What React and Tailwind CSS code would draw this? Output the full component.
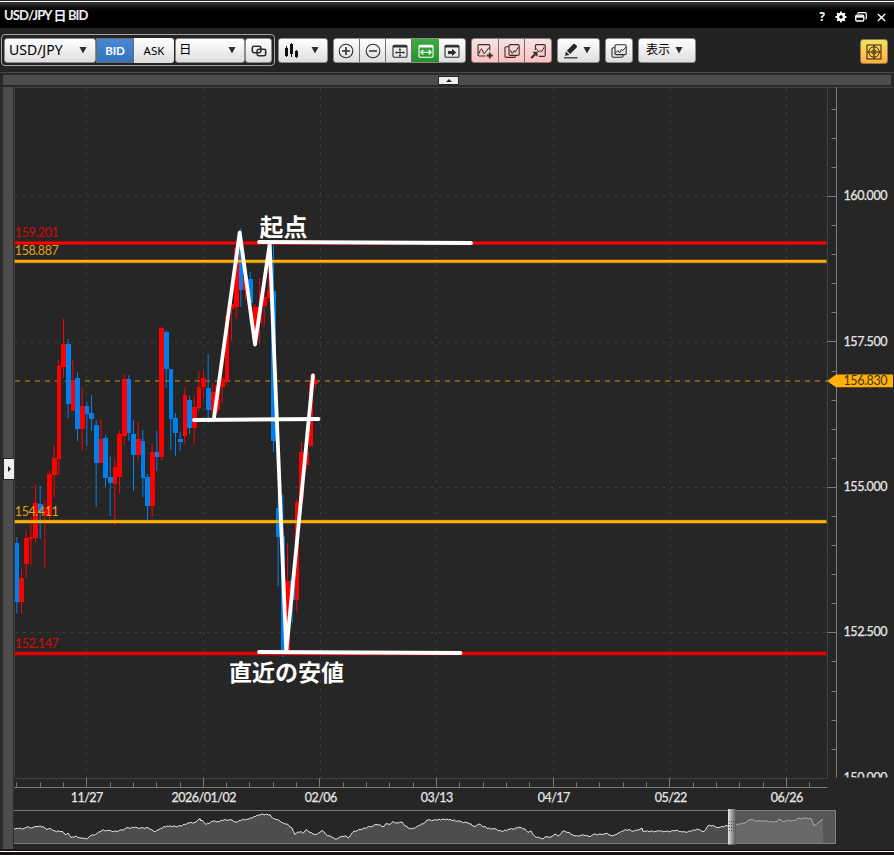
import React from 'react';

const UP = '#ff0000';
const DOWN = '#0080ee';

// direction, high, open/close top, open/close bottom, low
const candles = [
  ['d', 537, 543, 602, 613.5], ['u', 569, 578, 602, 614], ['u', 531, 538, 564, 578],
  ['u', 517, 537, 539, 565], ['u', 485, 503, 538, 543], ['d', 486, 504, 513, 539],
  ['u', 501, 510, 515, 568], ['u', 470, 474, 515, 520], ['u', 445, 458, 475, 498],
  ['u', 360, 366, 459, 475], ['u', 319, 344, 367, 378], ['d', 339, 344, 404, 418],
  ['u', 360, 380, 411, 411], ['d', 372, 378, 429, 441], ['u', 387, 406, 429, 450],
  ['d', 402, 406, 414, 446], ['d', 395, 413, 419, 431], ['d', 420, 425, 463, 507],
  ['u', 419, 439, 463, 463], ['d', 435, 438, 478, 487], ['d', 456, 477, 483, 516],
  ['u', 459, 467, 484, 526], ['u', 430, 434, 477, 493], ['u', 374, 379, 436, 445],
  ['d', 375, 379, 433, 441], ['d', 420, 434, 455, 491], ['u', 422, 439, 455, 461],
  ['d', 430, 441, 478, 497], ['d', 474, 477, 506, 520], ['u', 444, 452, 506, 516],
  ['d', 431, 452, 457, 471], ['u', 327, 328, 457, 460], ['d', 330, 332, 369, 388],
  ['d', 369, 369, 419, 450], ['d', 413, 418, 433, 456], ['d', 432, 439, 442, 451],
  ['u', 387, 395, 436, 444], ['d', 396, 400, 428, 434], ['u', 396, 407, 428, 444],
  ['u', 371, 387, 408, 411], ['u', 371, 378, 387, 399], ['d', 354, 388, 410, 423],
  ['u', 383, 392, 411, 417], ['u', 383, 385, 410, 413], ['u', 377, 379, 387, 403],
  ['u', 315, 316, 381, 385], ['u', 300, 304, 309, 341], ['u', 247, 248, 307, 319],
  ['d', 228, 248, 290, 307], ['u', 275, 278, 290, 300], ['d', 272, 279, 303, 323],
  ['u', 304, 307, 338, 345], ['u', 278, 307, 323, 344], ['u', 295, 297, 306, 327],
  ['u', 250, 290, 298, 302], ['d', 245, 291, 441, 452], ['d', 495, 508, 537, 586],
  ['d', 495, 536, 650, 657], ['u', 543, 581, 650, 650], ['d', 580, 580, 600, 623],
  ['u', 499, 502, 600, 612], ['u', 442, 452, 500, 514], ['u', 440, 452, 465, 470],
  ['u', 373, 383, 446, 447], ['u', 378, 381, 384, 388],
];

const dates = [
  [86.5, '11/27'], [203.5, '2026/01/02'], [320.5, '02/06'], [436.5, '03/13'],
  [553.5, '04/17'], [670.5, '05/22'], [786.5, '06/26'],
];
const prices = [[196.5, '160.000'], [342.5, '157.500'], [487.5, '155.000'], [632.5, '152.500']];

const levels = [
  { y: 243, label: '159.201', color: '#ff0000', text: '#d90808', edge: '#8c1010' },
  { y: 261.3, label: '158.887', color: '#ffb10a', text: '#e3a317', edge: '#8b651a' },
  { y: 521.6, label: '154.411', color: '#ffb10a', text: '#e3a317', edge: '#8b651a' },
  { y: 653.5, label: '152.147', color: '#ff0000', text: '#d90808', edge: '#8c1010' },
];

const overview = [
  [14, 828.5], [24, 828.5], [27, 827], [33, 827.5], [37, 826.5], [43, 826.5], [47, 829.5], [51, 828.5], [55, 831],
  [62, 831.5], [65, 834.5], [68, 833], [71, 837.5], [76, 836], [80, 838], [86, 839], [91, 835.5], [97, 833.5],
  [102, 830.5], [109, 830.5], [117, 831.5], [122, 830], [128, 827.5], [138, 828], [147, 827.5], [154, 831.5],
  [159, 829.5], [164, 826.5], [181, 826], [188, 823], [196, 822], [200, 818.5], [201, 821], [202, 820], [206, 824.5],
  [213, 821], [218, 821.5], [224, 820], [232, 820], [236, 822], [242, 820], [249, 819], [254, 816.5], [261, 814.5],
  [270, 814.5], [273, 818.5], [280, 821], [285, 824], [288, 824.5], [292, 828], [295, 834.5], [298, 832],
  [304, 832.5], [306, 829.5], [310, 832.5], [317, 834.5], [322, 830.5], [326, 834.5], [330, 836], [335, 839],
  [340, 837], [345, 836], [348, 838], [354, 831], [361, 829.5], [370, 826.5], [377, 824.5], [384, 826.5],
  [386, 823.5], [390, 824.5], [393, 821.5], [398, 823], [402, 822], [405, 826], [411, 829], [417, 826.5],
  [423, 824], [427, 820], [436, 820], [447, 819], [453, 820.5], [461, 821.5], [468, 823], [475, 826.5],
  [479, 824], [488, 828.5], [496, 829], [502, 831.5], [510, 829], [521, 827.5], [525, 829], [528, 832.5],
  [531, 831], [535, 836.5], [540, 838], [543, 839], [547, 836.5], [551, 837], [555, 834], [558, 836], [563, 831],
  [568, 832.5], [575, 836], [582, 835], [589, 836.5], [595, 834], [602, 834.5], [606, 833.5], [613, 836],
  [618, 833], [624, 830.5], [629, 829.5], [633, 831.5], [637, 830], [642, 828], [643, 831.5], [657, 831],
  [666, 831.5], [676, 830.5], [683, 832], [692, 831], [697, 829], [704, 831.5], [708, 825.5], [715, 826.5],
  [719, 827.5], [726, 825.5], [736, 825], [742, 823], [746, 822.5], [750, 819.5], [757, 821], [764, 820.5],
  [770, 822], [777, 821.5], [779, 819], [782, 821], [795, 820.5], [799, 818], [811, 818.5], [814, 825.5],
  [817, 823.5], [820, 821], [823, 820],
];

// small steps between the sampled points, so the line keeps its jagged look
const buildLine = (points) => {
  const wobble = [0.5, -0.4, 0.1, -0.7, 0.6, 0, -0.3, 0.7];
  let path = `M${points[0][0]} ${points[0][1]}`;
  let n = 0;
  for (let i = 1; i < points.length; i++) {
    const [px, py] = points[i - 1];
    const [x, y] = points[i];
    for (let cx = px + 1.5; cx < x - 1; cx += 1.5) {
      const cy = py + ((y - py) * (cx - px)) / (x - px) + wobble[n++ % wobble.length];
      path += `L${cx} ${cy.toFixed(2)}`;
    }
    path += `L${x} ${y}`;
  }
  return path;
};

const Caret = ({ className = '' }) => (
  <svg className={className} width="8" height="8" viewBox="0 0 8 8">
    <path d="M.5 1h7L4 7.5z" fill="#2e2e2e" />
  </svg>
);

const Icon = ({ children, size = 16 }) => (
  <svg className="mt-[2px] shrink-0" width={size} height={size} viewBox="0 0 16 16" fill="none" stroke="currentColor" strokeWidth="1.1">
    {children}
  </svg>
);

const TitleBar = () => (
  <header className="flex h-[27px] items-center justify-between border-t border-white bg-gradient-to-b from-[#373539] to-black to-45% pr-[8px] pl-[4px]">
    <h1 className="mt-px text-[13px] font-bold leading-none tracking-[-0.85px] whitespace-pre text-[#eeeeee]">
      USD/JPY 日 BID
    </h1>
    <div className="mt-[4px] flex items-center text-white">
      <span className="mr-[9px] w-[8px] text-center font-['Noto_Sans'] text-[12px] font-bold leading-none">?</span>
      <svg className="mr-[8px]" width="12" height="12" viewBox="0 0 12 12">
        <circle cx="6" cy="6" r="3" fill="none" stroke="#fff" strokeWidth="2.4" />
        <path
          d="M6 .5v2M6 9.5v2M.5 6h2M9.5 6h2M2.1 2.1l1.4 1.4M8.5 8.5l1.4 1.4M9.9 2.1L8.5 3.5M3.5 8.5L2.1 9.9"
          stroke="#fff"
          strokeWidth="1.8"
        />
      </svg>
      <svg className="mr-[10px]" width="12" height="10" viewBox="0 0 12 10" fill="none" stroke="#fff">
        <path d="M2.5 1.7C3 .8 3.5.6 4 .6h6q1.3 0 1.3 1.3v4.2q0 .8-.9 1.2" strokeWidth="1.2" />
        <rect x=".7" y="3.2" width="8.1" height="5.8" rx="1.2" strokeWidth="1.3" />
        <path d="M1 4.6h7.5" strokeWidth="2" />
      </svg>
      <svg width="9" height="9" viewBox="0 0 10 10" stroke="#fff" strokeWidth="1.5">
        <path d="M1 1l8 8M9 1L1 9" />
      </svg>
    </div>
  </header>
);

const button =
  'flex h-[25px] items-center rounded-[3px] border border-[#8b8b8b] bg-gradient-to-b from-white to-[#dedede] text-[#2e2e2e]';
const segment = 'flex h-full w-[26px] items-center justify-center border-r border-[#707070]';

const Toolbar = () => (
  <div className="flex h-[44px] items-center bg-[#232323] pr-[6px] pl-px">
    <div className="flex h-[32px] items-center rounded-[4px] border border-[#a5a5a5] px-[2px]">
      <div className={`${button} w-[92px] justify-between pr-[8px] pl-[4px]`}>
        <span className="font-['Noto_Sans'] text-[14px] leading-none text-black">USD/JPY</span>
        <Caret />
      </div>
      <div className="flex h-[25px] w-[38px] items-center justify-center border border-[#6a6a6a] bg-gradient-to-b from-[#4788d0] to-[#3474c0] pt-[2px] text-[11.5px] font-bold text-white">
        BID
      </div>
      <div className="flex h-[25px] w-[40px] items-center justify-center rounded-r-[3px] bg-gradient-to-b from-white to-[#dedede] pt-[2px] font-['Noto_Sans'] text-[11.5px] text-black">
        ASK
      </div>
      <div className={`${button} ml-px w-[70px] justify-between pr-[8px] pl-[3px]`}>
        <span className="text-[12.5px] leading-none text-black">日</span>
        <Caret />
      </div>
      <div className={`${button} w-[27px] justify-center`}>
        <svg className="mt-[2px]" width="16" height="12" viewBox="0 0 16 12" fill="none" stroke="#2e2e2e" strokeWidth="1.6">
          <rect x="1.3" y="1.3" width="8.6" height="6.4" rx="1.6" />
          <rect x="6.1" y="4.3" width="8.6" height="6.4" rx="1.6" />
        </svg>
      </div>
    </div>

    <div className={`${button} ml-[3px] w-[50px] justify-between pr-[8px] pl-[5px]`}>
      <svg className="mt-[2px]" width="15" height="16" viewBox="0 0 15 16">
        <path d="M1 5h3v8H1zM6 1h3v10H6zM11 8h3v6h-3zM2 3h1v11H2zM7 0h1v14H7zM12 7h1v8h-1z" fill="#111" />
      </svg>
      <Caret />
    </div>

    <div className={`${button} ml-[5px] w-[133px] overflow-hidden`}>
      <div className={`${segment} pr-px`}>
        <Icon>
          <circle cx="8" cy="8" r="6.8" />
          <path d="M4 8h8M8 4v8" strokeWidth="1.6" />
        </Icon>
      </div>
      <div className={segment}>
        <Icon>
          <circle cx="8" cy="8" r="6.8" />
          <path d="M4 8h8" strokeWidth="1.6" />
        </Icon>
      </div>
      <div className={`${segment} pl-[3px]`}>
        <Icon>
          <rect x="1" y="2.3" width="14" height="12" rx="1.3" />
          <path d="M1 3.3h14" strokeWidth="2.2" />
          <path d="M8 5.5v8M3.5 9.5h9M6.9 6.9L8 5.8l1.1 1.1M6.9 12.1L8 13.2l1.1-1.1M4.8 8.4L3.7 9.5l1.1 1.1M11.2 8.4l1.1 1.1-1.1 1.1" strokeWidth="1" />
        </Icon>
      </div>
      <div className="flex h-full w-[27px] items-center justify-center bg-gradient-to-b from-[#41a843] to-[#24952a] text-white">
        <Icon>
          <rect x="1" y="2.3" width="14" height="12" rx="1.3" />
          <path d="M1 3.3h14" strokeWidth="2.2" />
          <path d="M3 9.3h10M5.2 7L3 9.3l2.2 2.3M10.8 7L13 9.3l-2.2 2.3" strokeWidth="1.3" />
        </Icon>
      </div>
      <div className="flex h-full flex-1 items-center justify-center">
        <Icon>
          <rect x="1" y="2.3" width="14" height="12" rx="1.3" />
          <path d="M1 3.3h14" strokeWidth="2.2" />
          <path d="M4 8h4V5.8l4.2 3.7L8 13v-2H4z" fill="currentColor" stroke="none" />
        </Icon>
      </div>
    </div>

    <div className="ml-[5px] flex h-[25px] w-[81px] items-center overflow-hidden rounded-[3px] border border-[#8b7b7b] bg-gradient-to-b from-[#f3e4e4] to-[#ffc0c0] text-[#382c2c]">
      <div className="flex h-full w-[27px] items-center justify-center border-r border-[#707070]">
        <Icon>
          <path d="M8.5 13H2.2Q1 13 1 11.8V2.8Q1 1.6 2.2 1.6h9.4q1.2 0 1.2 1.2V7.5" />
          <path d="M2 10.8q1.5-5.5 2.5-5t1.8 4q.6 1.8 1.4.5L12 4.5" strokeWidth="1" />
          <path d="M12.8 9.5v6M9.8 12.5h6" strokeWidth="1.9" />
        </Icon>
      </div>
      <div className={`${segment} pl-px`}>
        <Icon>
          <path d="M5 3.8H2.2Q1 3.8 1 5v8.2q0 1.2 1.2 1.2h8q1.2 0 1.2-1.2v-.8" />
          <rect x="5" y="1.6" width="10.2" height="10.8" rx="1.2" />
          <path d="M6.2 6.8l2 3.8 2-3 1 1.6L14.5 4" strokeWidth="1" />
        </Icon>
      </div>
      <div className="flex h-full flex-1 items-center justify-center">
        <Icon>
          <path d="M5.4 7V2.8q0-1.2 1.2-1.2H14q1.2 0 1.2 1.2v9.4q0 1.2-1.2 1.2H9" />
          <path d="M6.4 5.5l2.3 3.6 1.4-1.6 1.4 1.3 2.8-4.8" strokeWidth="1" />
          <path d="M1.2 15l4.3-4" strokeWidth="2.2" />
          <path d="M2.3 8.8h5.2v5.2z" fill="currentColor" stroke="none" />
        </Icon>
      </div>
    </div>

    <div className={`${button} ml-[5px] w-[43px] justify-between pr-[8px] pl-[6px]`}>
      <svg className="mt-[2px]" width="14" height="16" viewBox="0 0 14 16">
        <path d="M1 12.8l.9-4.2 3.6 3.3zM2.8 7.8L9.2 1.2q1-.9 2.1.2l1.3 1.2q.9 1.1 0 2L6.3 11z" fill="#252525" />
        <path d="M0 14.8h13.5" stroke="#252525" strokeWidth="1.2" />
      </svg>
      <Caret />
    </div>
    <div className={`${button} ml-[5px] w-[28px] justify-center`}>
      <Icon>
        <path d="M4 4.8H2.2Q1 4.8 1 6v7q0 1.2 1.2 1.2h8.6q1.2 0 1.2-1.2v-1.4" />
        <rect x="4" y="1.8" width="11.2" height="9.8" rx="1.2" />
        <path d="M4.2 10.4l2.8-3 1.6 2.6 1.9-3.6 1 1.4L15 4" strokeWidth="1" />
      </Icon>
    </div>
    <div className={`${button} ml-[5px] w-[58px] pl-[7px]`}>
      <span className="text-[12px] leading-none text-black">表示</span>
      <Caret className="ml-[5px]" />
    </div>

    <div className="mt-[2px] ml-auto flex h-[25px] w-[28px] items-center justify-center rounded-[3px] border border-[#8b7b55] bg-gradient-to-b from-[#f2e05e] to-[#ffb03c] text-[#3d3218]">
      <Icon>
        <rect x="1" y="1" width="14" height="14" />
        <circle cx="8" cy="8" r="5.2" strokeWidth="1" />
        <circle cx="8" cy="8" r="2.2" strokeWidth=".9" />
        <path d="M8 1v14M1 8h14" />
      </Icon>
    </div>
  </div>
);

const Chart = () => (
  <svg className="block" width="880" height="722" viewBox="14 87 880 722" fontFamily="Lato, sans-serif">
    <defs>
      <clipPath id="plot">
        <rect x="14" y="87" width="880" height="690.5" />
      </clipPath>
      <clipPath id="candles">
        <rect x="15" y="87" width="812" height="690" />
      </clipPath>
    </defs>
    <path d="M14.5 777V87.5H893" fill="none" stroke="#404040" />
    <path d="M14 778.5h813.5V87" fill="none" stroke="#404040" />

    {/* grid */}
    <g stroke="#3c3c3c" strokeDasharray="3 5">
      {dates.map(([x]) => <path key={x} d={`M${x} 88V778`} />)}
      {prices.map(([y]) => <path key={y} d={`M15 ${y}H827`} />)}
    </g>

    {/* axes */}
    <g stroke="#7b7b7b">
      <path d="M836.5 87V777.5M14 787.5H827" />
      {Array.from({ length: 35 }, (_, i) => {
        const x = Math.floor(16.7 + i * 23.33) + 0.5;
        return <path key={i} d={`M${x} ${i % 5 === 3 ? 778 : 782.5}V787`} />;
      })}
      {Array.from({ length: 23 }, (_, i) => {
        const y = Math.floor(109.2 + i * 29.09) + 0.5;
        return <path key={i} d={`M${i % 5 === 3 ? 827 : 831.5} ${y}H836`} />;
      })}
    </g>
    <g fill="#e4e4e4" fontSize="12.5" stroke="#e4e4e4" strokeWidth="0.25">
      {prices.map(([y, label]) => (
        <text key={label} x="843.5" y={y + 3.7} textLength="44">{label}</text>
      ))}
      <text x="843.5" y="782" textLength="44" clipPath="url(#plot)">150.000</text>
      {dates.map(([x, label]) => (
        <text key={label} x={x + 0.5} y="802" textAnchor="middle" textLength={label.length > 5 ? 65 : 32.5}>{label}</text>
      ))}
    </g>

    <path d="M15 381H827" stroke="#967018" strokeWidth="1.6" strokeDasharray="5 5" />

    <g clipPath="url(#candles)">
      {candles.map(([dir, high, top, bottom, low], i) => {
        const x = 16.83 + i * 4.6667;
        const color = dir === 'u' ? UP : DOWN;
        return (
          <g key={i} fill={color}>
            <rect x={x - 0.5} y={high} width="1" height={low - high} />
            <rect x={x - 2.33} y={top} width="4.67" height={bottom - top} shapeRendering="crispEdges" />
          </g>
        );
      })}
    </g>

    {levels.map(({ y, label, color, text, edge }) => (
      <g key={label}>
        <path d={`M14 ${y}H827`} stroke={edge} strokeWidth="3.8" />
        <path d={`M15 ${y}H826`} stroke={color} strokeWidth="2.6" />
        <text x="14.8" y={y - 6} fill={text} fontSize="12.5" textLength="44">{label}</text>
      </g>
    ))}

    <path d="M827 381l9-6.5h57v12.8h-57z" fill="#ffb10a" />
    <text x="843.5" y="385.3" fill="#40331a" fontSize="12.5" textLength="44">156.830</text>

    {/* drawn annotations */}
    <g fill="none" stroke="#fff" strokeWidth="3.8" strokeLinecap="round" strokeLinejoin="round">
      <path d="M214 418L239.7 232.5L255 344.5L269.7 244L286.3 651.5L313 375.5" />
      <path d="M194 420L318.5 419M259 242L471 243M259 652L460.5 653" />
    </g>
    <g fill="#fff" fontFamily="'Noto Sans CJK JP', sans-serif" fontWeight="700">
      <text x="259.5" y="236" fontSize="24">起点</text>
      <text x="229" y="680.5" fontSize="23">直近の安値</text>
    </g>
  </svg>
);

const Overview = () => {
  const line = buildLine(overview);
  return (
    <svg className="block" width="880" height="37" viewBox="14 809 880 37">
      <defs>
        <linearGradient id="handle">
          <stop offset="0" stopColor="#e8e8e8" />
          <stop offset="0.4" stopColor="#a8a8a8" />
          <stop offset="1" stopColor="#555555" />
        </linearGradient>
      </defs>
      <path d={`${line}V843H14Z`} fill="#4d4d4d" />
      <path d={line} fill="none" stroke="#e6e6e6" />
      <path d="M14 810.5H836M14 843.5H836" stroke="#7b7b7b" />
      <rect x="735" y="810.5" width="100.5" height="33" fill="#808080" fillOpacity="0.55" stroke="#808080" />
      <rect x="728" y="809" width="8" height="35.5" fill="url(#handle)" />
      <path d="M729 821.5h5M729 824.5h5M729 827.5h5M729 830.5h5" stroke="#555" strokeDasharray="1 1" />
    </svg>
  );
};

const App = () => (
  <div className="h-[855px] w-[894px] overflow-hidden bg-[#262626] pt-px font-[Lato,'Noto_Sans_CJK_JP',sans-serif]">
    <TitleBar />
    <Toolbar />
    <div className="flex h-[15px] justify-center border-t border-[#484848] bg-[#292929] px-[3px] pt-[2px] pb-[2px]">
      <div className="flex h-[10px] w-full items-center justify-center bg-[#4d4d4d]">
        <div className="mr-[-3px] flex h-[9px] w-[21px] items-center justify-center border border-[#252525] bg-[#eeeeee]">
          <svg width="6" height="3" viewBox="0 0 6 3"><path d="M0 3l3-3 3 3z" fill="#222" /></svg>
        </div>
      </div>
    </div>
    <div className="flex h-[762px]">
      <aside className="flex w-[14px] justify-end bg-[#2b2b2b] pr-px">
        <div className="flex w-[10px] items-center justify-center bg-[#4d4d4d]">
          <div className="mt-[2px] mr-[-2px] flex h-[22px] w-[12px] shrink-0 items-center justify-center border border-[#252525] bg-[#eeeeee]">
            <svg width="3" height="6" viewBox="0 0 3 6"><path d="M0 0l3 3-3 3z" fill="#222" /></svg>
          </div>
        </div>
      </aside>
      <main className="w-[880px]">
        <Chart />
        <Overview />
      </main>
    </div>
    <div className="h-[6px] border-t border-[#1c1c1c] bg-[#151115] pt-px">
      <div className="h-px bg-white"></div>
    </div>
  </div>
);

export default App;
